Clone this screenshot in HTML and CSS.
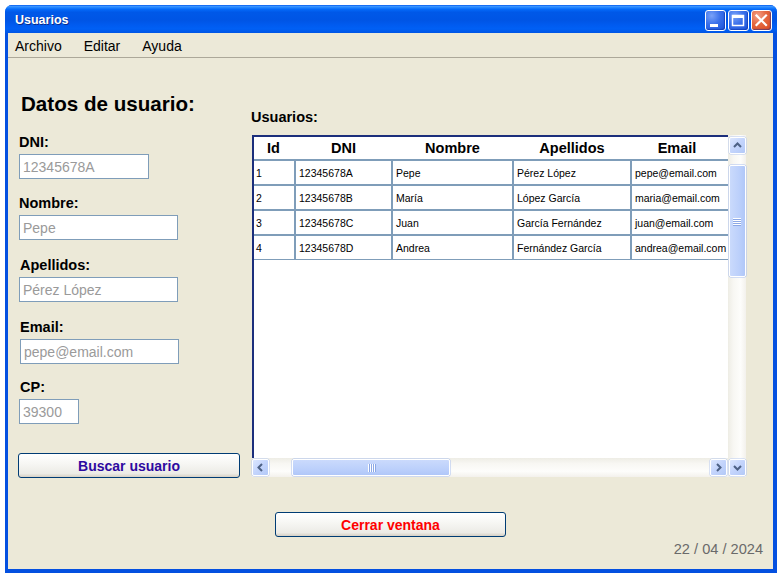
FILE: index.html
```html
<!DOCTYPE html>
<html lang="es">
<head>
<meta charset="utf-8">
<title>Usuarios</title>
<link rel="stylesheet" href="styles.css">
</head>
<body>
<div class="window">
  <div class="titlebar">
    <span class="title">Usuarios</span>
    <div class="controls">
      <span class="ctl"><svg width="21" height="21" viewBox="0 0 21 21"><rect x="5" y="14" width="8" height="3" fill="#fff"/></svg></span>
      <span class="ctl"><svg width="21" height="21" viewBox="0 0 21 21"><rect x="4.5" y="5.5" width="11" height="10" fill="none" stroke="#fff" stroke-width="1.5"/><rect x="4" y="5" width="12" height="3" fill="#fff"/></svg></span>
      <span class="ctl ctl-close"><svg width="21" height="21" viewBox="0 0 21 21"><path d="M5.5 5.5 L15 15 M15 5.5 L5.5 15" stroke="#fff" stroke-width="2.2" stroke-linecap="square"/></svg></span>
    </div>
  </div>
  <div class="client">
    <nav class="menubar">
      <span>Archivo</span>
      <span>Editar</span>
      <span>Ayuda</span>
    </nav>
    <div class="main">
      <section class="form">
        <h1 class="heading">Datos de usuario:</h1>
        <div class="field f-dni">
          <label class="label">DNI:</label>
          <input class="input w-dni" type="text" placeholder="12345678A">
        </div>
        <div class="field f-nombre">
          <label class="label">Nombre:</label>
          <input class="input w-long" type="text" placeholder="Pepe">
        </div>
        <div class="field f-apellidos">
          <label class="label">Apellidos:</label>
          <input class="input w-long" type="text" placeholder="Pérez López">
        </div>
        <div class="field f-email">
          <label class="label">Email:</label>
          <input class="input w-long shift" type="text" placeholder="pepe@email.com">
        </div>
        <div class="field f-cp">
          <label class="label">CP:</label>
          <input class="input w-cp" type="text" placeholder="39300">
        </div>
        <button class="btn btn-search">Buscar usuario</button>
      </section>
      <section class="users">
        <div class="users-label">Usuarios:</div>
        <div class="grid">
          <div class="grid-left">
            <div class="viewport">
              <table class="table">
                <colgroup>
                  <col style="width:43px">
                  <col style="width:97px">
                  <col style="width:121px">
                  <col style="width:118px">
                  <col style="width:120px">
                </colgroup>
                <thead>
                  <tr><th>Id</th><th>DNI</th><th>Nombre</th><th>Apellidos</th><th class="th-email">Email</th></tr>
                </thead>
                <tbody>
                  <tr><td>1</td><td>12345678A</td><td>Pepe</td><td>Pérez López</td><td>pepe@email.com</td></tr>
                  <tr><td>2</td><td>12345678B</td><td>María</td><td>López García</td><td>maria@email.com</td></tr>
                  <tr><td>3</td><td>12345678C</td><td>Juan</td><td>García Fernández</td><td>juan@email.com</td></tr>
                  <tr><td>4</td><td>12345678D</td><td>Andrea</td><td>Fernández García</td><td>andrea@email.com</td></tr>
                </tbody>
              </table>
            </div>
            <div class="hscroll">
              <span class="sbtn"><svg width="15" height="15" viewBox="0 0 15 15"><polyline points="9,4 5.5,7.5 9,11" fill="none" stroke="#4D6185" stroke-width="2"/></svg></span>
              <span class="hthumb"><svg width="9" height="8" viewBox="0 0 9 8"><path d="M1.5 0V8M3.5 0V8M5.5 0V8M7.5 0V8" stroke="#fff" stroke-width="1"/><path d="M2.5 0V8M4.5 0V8M6.5 0V8M8.5 0V8" stroke="#8CA8E6" stroke-width="1"/></svg></span>
              <span class="hspacer"></span>
              <span class="sbtn"><svg width="15" height="15" viewBox="0 0 15 15"><polyline points="6,4 9.5,7.5 6,11" fill="none" stroke="#4D6185" stroke-width="2"/></svg></span>
            </div>
          </div>
          <div class="vscroll">
            <span class="sbtn"><svg width="15" height="15" viewBox="0 0 15 15"><polyline points="4,9 7.5,5.5 11,9" fill="none" stroke="#4D6185" stroke-width="2"/></svg></span>
            <span class="vthumb"><svg width="8" height="9" viewBox="0 0 8 9"><path d="M0 1.5H8M0 3.5H8M0 5.5H8M0 7.5H8" stroke="#fff" stroke-width="1"/><path d="M0 2.5H8M0 4.5H8M0 6.5H8M0 8.5H8" stroke="#8CA8E6" stroke-width="1"/></svg></span>
            <span class="vspacer"></span>
            <span class="sbtn"><svg width="15" height="15" viewBox="0 0 15 15"><polyline points="4,6 7.5,9.5 11,6" fill="none" stroke="#4D6185" stroke-width="2"/></svg></span>
          </div>
        </div>
      </section>
    </div>
    <div class="footer">
      <button class="btn btn-close">Cerrar ventana</button>
      <div class="date">22 / 04 / 2024</div>
    </div>
  </div>
</div>
</body>
</html>
```

FILE: styles.css
```css
* { box-sizing: border-box; }
html, body { margin: 0; padding: 0; background: #fff; }
body { font-family: "Liberation Sans", Arial, sans-serif; color: #000; }

.window {
  margin: 5px 0 0 5px;
  width: 772px;
  height: 568px;
  background: #0450E0;
  border-radius: 7px 7px 0 0;
  display: flex;
  flex-direction: column;
}

.titlebar {
  height: 28px;
  flex: none;
  display: flex;
  align-items: center;
  justify-content: space-between;
  padding: 0 5px 0 10px;
  border-radius: 7px 7px 0 0;
  background: linear-gradient(to bottom, #0058ee 0%, #3d95ff 5%, #1a80ff 10%, #0468f8 16%, #0058e8 26%, #0055e5 55%, #005bf0 72%, #0060f5 85%, #0055e5 100%);
}
.title {
  color: #fff;
  font-weight: bold;
  font-size: 12.5px;
  text-shadow: 1px 1px 0 #0a2c8c;
  margin-top: 1px;
}
.controls { display: flex; gap: 2px; margin-top: 3px; }
.ctl {
  width: 21px; height: 21px;
  border: 1px solid #fff;
  border-radius: 3px;
  background: radial-gradient(circle at 30% 25%, #7aa2f8 0%, #3a70ea 45%, #1a52d8 100%);
  display: flex;
  box-shadow: inset -1px -1px 1px rgba(0,40,160,0.5);
}
.ctl svg { margin: -1px; }
.ctl-close {
  background: radial-gradient(circle at 30% 25%, #f2a08a 0%, #e4673f 45%, #d8481f 100%);
}

.client {
  flex: 1;
  margin: 0 4px 4px 3px;
  background: #ECE9D8;
  display: flex;
  flex-direction: column;
}

.menubar {
  height: 25px;
  flex: none;
  display: flex;
  align-items: center;
  gap: 22px;
  padding: 1px 0 0 7px;
  font-size: 14px;
  border-bottom: 1px solid #ACA899;
}

.main {
  height: 420px;
  flex: none;
  display: flex;
  gap: 11px;
  padding: 0 27px 0 10px;
}

.form {
  width: 222px;
  display: flex;
  flex-direction: column;
  align-items: flex-start;
  padding-top: 34px;
}
.heading {
  margin: 0 0 0 3px;
  font-size: 20.6px;
  line-height: 24px;
  font-weight: bold;
}
.field { display: flex; flex-direction: column; align-items: flex-start; margin-left: 1px; }
.f-dni { margin-top: 17px; }
.f-nombre { margin-top: 15px; }
.f-apellidos { margin-top: 16px; }
.f-email { margin-top: 16px; }
.f-cp { margin-top: 14px; }
.label {
  font-size: 14.5px;
  line-height: 18px;
  font-weight: bold;
  margin-bottom: 3px;
}
.f-apellidos .label, .f-email .label, .f-cp .label { margin-left: 1px; }
.input {
  height: 25px;
  border: 1px solid #7F9DB9;
  background: #fff;
  padding: 0 3px;
  font-family: "Liberation Sans", Arial, sans-serif;
  font-size: 14px;
  outline: none;
  margin: 0;
}
.input::placeholder { color: #9a9a9a; }
.w-dni { width: 130px; }
.w-long { width: 159px; }
.w-cp { width: 60px; }
.shift { margin-left: 1px; }

.btn {
  height: 25px;
  border: 1px solid #003C74;
  border-radius: 3px;
  background: linear-gradient(to bottom, #ffffff 0%, #f7f7f4 40%, #ecebe6 85%, #d6d0c5 100%);
  font-family: "Liberation Sans", Arial, sans-serif;
  font-size: 14px;
  font-weight: bold;
  padding: 0;
}
.btn-search {
  width: 222px;
  margin-top: 29px;
  color: #2E0AA0;
}

.users { flex: 1; padding-top: 50px; display: flex; flex-direction: column; }
.users-label {
  font-size: 14.5px;
  line-height: 18px;
  font-weight: bold;
  margin-bottom: 9px;
}
.grid { display: flex; height: 342px; margin-left: 1px; }
.grid-left { width: 476px; display: flex; flex-direction: column; }
.viewport {
  flex: 1;
  background: #fff;
  border-top: 2px solid #1C2F7C;
  border-left: 2px solid #1C2F7C;
  overflow: hidden;
}
.table {
  table-layout: fixed;
  width: 499px;
  border-collapse: separate;
  border-spacing: 0;
  margin-left: -2px;
}
.table th {
  height: 23px;
  padding: 0;
  font-size: 14.5px;
  font-weight: bold;
  text-align: center;
  border-bottom: 1px solid #7F9DB9;
}
.table th.th-email { padding-right: 28px; }
.table td {
  height: 25px;
  padding: 0 0 0 3px;
  font-size: 10.5px;
  border: 1px solid #7F9DB9;
  white-space: nowrap;
  overflow: hidden;
}

.hscroll {
  height: 19px;
  flex: none;
  display: flex;
  align-items: center;
  padding: 0 1px 0 0;
  background: linear-gradient(to bottom, #eeede5 0%, #f8f7f3 30%, #fdfdfb 70%, #f3f1ec 100%);
}
.vscroll {
  width: 18px;
  display: flex;
  flex-direction: column;
  align-items: center;
  padding: 2px 0 1px 0;
  background: linear-gradient(to right, #eeede5 0%, #f8f7f3 30%, #fdfdfb 70%, #f3f1ec 100%);
}
.sbtn {
  width: 17px;
  height: 17px;
  flex: none;
  display: flex;
  align-items: center;
  justify-content: center;
  border: 1px solid #fff;
  border-radius: 2px;
  background: linear-gradient(135deg, #dbe6fe 0%, #c3d4fc 50%, #b3c9f7 100%);
  box-shadow: 0 0 0 0.5px #b7c9ef;
}
.hthumb {
  width: 158px;
  height: 17px;
  margin-left: 23px;
  display: flex;
  align-items: center;
  justify-content: center;
  border: 1px solid #fff;
  border-radius: 2px;
  background: linear-gradient(to bottom, #cadafc 0%, #bcd0fb 60%, #b0c7f8 100%);
  box-shadow: 0 0 0 0.5px #a9bff0;
}
.hspacer { flex: 1; }
.vthumb {
  width: 17px;
  height: 112px;
  margin-top: 11px;
  display: flex;
  align-items: center;
  justify-content: center;
  border: 1px solid #fff;
  border-radius: 2px;
  background: linear-gradient(to right, #cadafc 0%, #bcd0fb 60%, #b0c7f8 100%);
  box-shadow: 0 0 0 0.5px #a9bff0;
}
.vspacer { flex: 1; }

.footer {
  flex: 1;
  display: flex;
  flex-direction: column;
  align-items: center;
  padding-top: 34px;
}
.btn-close {
  width: 231px;
  color: #FF0000;
}
.date {
  align-self: flex-end;
  margin: 4px 10px 0 0;
  font-size: 14.6px;
  line-height: 16px;
  color: #6a6a6a;
}
```
